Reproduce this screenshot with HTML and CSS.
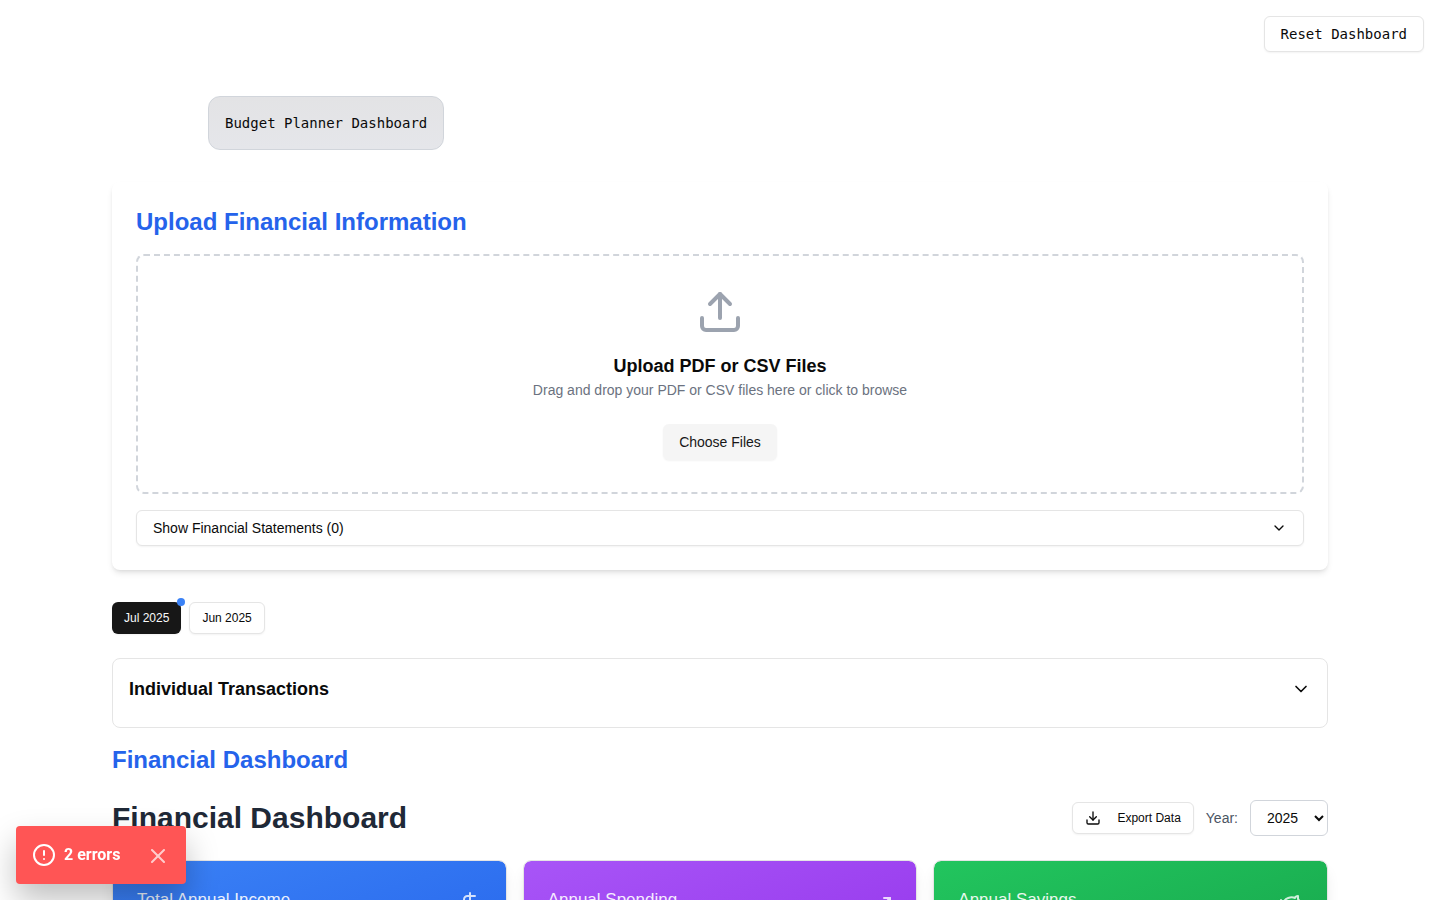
FILE: index.html
```html
<!DOCTYPE html>
<html lang="en">
<head>
<meta charset="utf-8">
<meta name="viewport" content="width=device-width, initial-scale=1">
<title>Budget Planner Dashboard</title>
<link rel="stylesheet" href="styles.css">
</head>
<body>
<div class="page">
  <header class="topbar">
    <button type="button" class="btn btn-outline mono">Reset Dashboard</button>
  </header>

  <main class="container">
    <div class="brand mono">Budget Planner Dashboard</div>

    <section class="upload-card">
      <h2 class="section-title">Upload Financial Information</h2>
      <div class="dropzone">
        <svg class="icon upload-icon" viewBox="0 0 24 24" aria-hidden="true"><path d="M21 15v4a2 2 0 0 1-2 2H5a2 2 0 0 1-2-2v-4"/><path d="M17 8l-5-5-5 5"/><path d="M12 3v12"/></svg>
        <h3 class="card-title">Upload PDF or CSV Files</h3>
        <p class="hint">Drag and drop your PDF or CSV files here or click to browse</p>
        <button type="button" class="btn btn-secondary">Choose Files</button>
      </div>
      <button type="button" class="btn btn-outline statements">
        <span>Show Financial Statements (0)</span>
        <svg class="icon icon-16" viewBox="0 0 24 24" aria-hidden="true"><path d="M6 9l6 6 6-6"/></svg>
      </button>
    </section>

    <nav class="months" aria-label="Months">
      <button type="button" class="btn btn-small btn-dark">Jul 2025<span class="dot"></span></button>
      <button type="button" class="btn btn-small btn-outline">Jun 2025</button>
    </nav>

    <section class="transactions">
      <h3 class="card-title">Individual Transactions</h3>
      <svg class="icon icon-20" viewBox="0 0 24 24" aria-hidden="true"><path d="M6 9l6 6 6-6"/></svg>
    </section>

    <h2 class="section-title">Financial Dashboard</h2>

    <div class="dash-head">
      <h1 class="dash-title">Financial Dashboard</h1>
      <div class="dash-tools">
        <button type="button" class="btn btn-small btn-outline export">
          <svg class="icon icon-16" viewBox="0 0 24 24" aria-hidden="true"><path d="M21 15v4a2 2 0 0 1-2 2H5a2 2 0 0 1-2-2v-4"/><path d="M7 10l5 5 5-5"/><path d="M12 15V3"/></svg>
          Export Data
        </button>
        <label class="year-label" for="year">Year:</label>
        <select class="year" id="year"><option>2025</option></select>
      </div>
    </div>

    <div class="stats">
      <article class="stat stat-blue">
        <h3 class="stat-title">Total Annual Income</h3>
        <svg class="icon stat-icon" viewBox="0 0 24 24" aria-hidden="true"><path d="M12 2v20"/><path d="M17 5H9.5a3.5 3.5 0 0 0 0 7h5a3.5 3.5 0 0 1 0 7H6"/></svg>
      </article>
      <article class="stat stat-purple">
        <h3 class="stat-title">Annual Spending</h3>
        <svg class="icon stat-icon" viewBox="0 0 24 24" aria-hidden="true"><path d="M22 7l-8.500 8.500-5-5L2 17"/><path d="M16 7h6v6"/></svg>
      </article>
      <article class="stat stat-green">
        <h3 class="stat-title">Annual Savings</h3>
        <svg class="icon stat-icon" viewBox="0 0 24 24" aria-hidden="true"><path d="M19 5c-1.500 0-2.800 1.400-3 2-3.500-1.500-11-.3-11 5 0 1.800 0 3 2 4.500V20h4v-2h3v2h4v-4c1-.5 1.700-1 2-2h2v-4h-2c0-1-.5-1.500-1-2V5z"/><path d="M2 9v1c0 1.100.9 2 2 2h1"/><path d="M16 11h.01"/></svg>
      </article>
    </div>
  </main>
</div>

<div class="toast" role="status">
  <svg class="icon icon-24" viewBox="0 0 24 24" aria-hidden="true"><circle cx="12" cy="12" r="10"/><path d="M12 8v4"/><path d="M12 16h.01"/></svg>
  <span>2 errors</span>
  <button type="button" class="toast-close" aria-label="Close">
    <svg class="icon icon-24" viewBox="0 0 24 24" aria-hidden="true"><path d="M18 6L6 18"/><path d="M6 6l12 12"/></svg>
  </button>
</div>
</body>
</html>
```
FILE: styles.css
```css
*, *::before, *::after { box-sizing: border-box; }

body {
  margin: 0;
  background: #fff;
  color: #0a0a0a;
  font-family: "Liberation Sans", Arial, sans-serif;
  font-size: 14px;
  line-height: 20px;
}

h1, h2, h3, p { margin: 0; }
button, select { font: inherit; color: inherit; }

.page {
  height: 100vh;
  overflow: hidden;
}

.mono { font-family: "DejaVu Sans Mono", monospace; }

.icon {
  display: block;
  flex: none;
  fill: none;
  stroke: currentColor;
  stroke-width: 2;
  stroke-linecap: round;
  stroke-linejoin: round;
}
.icon-16 { width: 16px; height: 16px; }
.icon-20 { width: 20px; height: 20px; }
.icon-24 { width: 24px; height: 24px; }

.btn {
  display: inline-flex;
  align-items: center;
  justify-content: center;
  height: 36px;
  padding: 0 16px;
  border: 0;
  border-radius: 6px;
  white-space: nowrap;
  box-shadow: 0 1px 2px rgba(0, 0, 0, 0.05);
}
.btn-outline {
  background: #fff;
  border: 1px solid #e5e5e5;
}
.btn-secondary { background: #f5f5f5; color: #171717; }
.btn-small { height: 32px; padding: 0 12px; font-size: 12px; line-height: 16px; }
.btn-dark { position: relative; background: #171717; color: #fafafa; }

.topbar {
  display: flex;
  justify-content: flex-end;
  padding: 16px 16px 0;
}

.container {
  max-width: 1216px;
  margin: 44px auto 0;
}

.brand {
  width: fit-content;
  margin-left: 96px;
  padding: 16px;
  border: 1px solid #d1d5db;
  border-radius: 12px;
  background: linear-gradient(#e3e3e5, #e5e6ea);
}

.upload-card {
  margin-top: 32px;
  padding: 24px;
  border-radius: 8px;
  background: #fff;
  box-shadow: 0 4px 6px -1px rgba(0, 0, 0, 0.1), 0 2px 4px -2px rgba(0, 0, 0, 0.1);
}

.section-title {
  color: #2563eb;
  font-size: 24px;
  line-height: 32px;
}

.dropzone {
  display: flex;
  flex-direction: column;
  align-items: center;
  margin: 16px 0;
  padding: 32px;
  border: 2px dashed #d1d5db;
  border-radius: 8px;
}
.upload-icon {
  width: 48px;
  height: 48px;
  margin-bottom: 16px;
  color: #9ca3af;
}
.card-title { font-size: 18px; line-height: 28px; }
.hint { margin-bottom: 24px; color: #6b7280; }

.statements { width: 100%; justify-content: space-between; }

.months {
  display: flex;
  gap: 8px;
  margin-top: 32px;
}
.dot {
  position: absolute;
  top: -4px;
  right: -4px;
  width: 8px;
  height: 8px;
  border-radius: 50%;
  background: #3b82f6;
}

.transactions {
  display: flex;
  align-items: center;
  justify-content: space-between;
  margin: 24px 0 16px;
  padding: 16px 16px 24px;
  border: 1px solid #e5e5e5;
  border-radius: 8px;
}

.dash-head {
  display: flex;
  align-items: center;
  justify-content: space-between;
  margin: 24px 0;
}
.dash-title { color: #1f2937; font-size: 30px; line-height: 36px; }
.dash-tools { display: flex; align-items: center; gap: 12px; }
.export { gap: 16px; }
.year-label { color: #4b5563; }
.year {
  height: 36px;
  padding: 0 12px;
  border: 1px solid #d1d5db;
  border-radius: 6px;
  background: #fff;
}

.stats {
  display: grid;
  grid-template-columns: repeat(3, 1fr);
  gap: 16px;
}
.stat {
  display: flex;
  align-items: flex-start;
  justify-content: space-between;
  min-height: 140px;
  padding: 24px;
  border: 1px solid #e5e5e5;
  border-radius: 8px;
  background-clip: padding-box;
  color: #fff;
  box-shadow: 0 10px 15px -3px rgba(0, 0, 0, 0.1), 0 4px 6px -4px rgba(0, 0, 0, 0.1);
}
.stat-blue { background-image: linear-gradient(to bottom right, #3b82f6, #2563eb); }
.stat-purple { background-image: linear-gradient(to bottom right, #a855f7, #9333ea); }
.stat-green { background-image: linear-gradient(to bottom right, #22c55e, #16a34a); }
.stat-title { font-size: 17px; font-weight: 400; line-height: 30px; opacity: 0.9; }
.stat-icon { width: 24px; height: 24px; margin-top: 6px; opacity: 0.8; }

.toast {
  position: fixed;
  left: 16px;
  bottom: 16px;
  display: flex;
  align-items: center;
  gap: 8px;
  padding: 16px;
  border-radius: 4px;
  background: #ff5555;
  color: #fff;
  font-family: Roboto, "Liberation Sans", sans-serif;
  font-size: 16px;
  font-weight: 700;
  line-height: 26px;
  box-shadow: 0 16px 32px rgba(0, 0, 0, 0.25);
}
.toast-close {
  margin-left: 18px;
  padding: 2px 0 0;
  border: 0;
  background: none;
  opacity: 0.7;
}
```
